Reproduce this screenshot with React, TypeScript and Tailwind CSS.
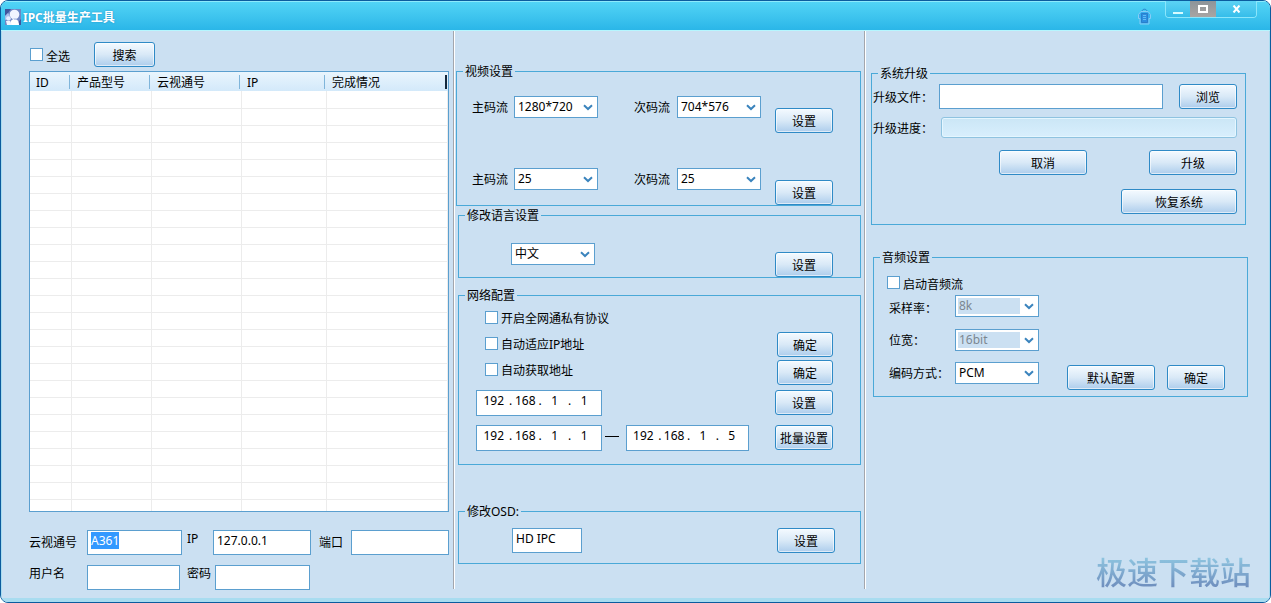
import { useEffect, useRef, useState } from 'react';
import type { ReactNode } from 'react';

interface Column {
  title: string;
  width: string;
}

const columns: Column[] = [
  { title: 'ID', width: 'w-[41px]' },
  { title: '产品型号', width: 'w-[80px]' },
  { title: '云视通号', width: 'w-[90px]' },
  { title: 'IP', width: 'w-[85px]' },
  { title: '完成情况', width: 'w-auto' },
];

const ROW_COUNT = 24;

const inputClass = 'min-w-0 border border-[#5b9fcf] bg-white px-[3px] pb-1 outline-none';

function Button({ children, className = 'w-[58px]' }: { children: ReactNode; className?: string }) {
  return (
    <button
      type="button"
      className={`h-[25px] shrink-0 rounded-[3px] border border-[#2f8ac6] bg-linear-to-b from-[#f4faff] via-[#d9e9f7] to-[#adcdec] pt-0.5 text-center whitespace-nowrap shadow-[inset_0_0_0_1px_rgba(255,255,255,0.6)] hover:brightness-105 ${className}`}
    >
      {children}
    </button>
  );
}

function Combo({ id, options, label, disabled = false }: { id: string; options: string[]; label?: string; disabled?: boolean }) {
  return (
    <div className="relative h-[22px] w-[84px] shrink-0 border border-[#5b9fcf] bg-white p-0.5">
      <select
        id={id}
        aria-label={label}
        disabled={disabled}
        className="block h-4 w-full appearance-none bg-white pl-px leading-4 outline-none disabled:bg-[#cbe0f2] disabled:text-[#7c8791] disabled:opacity-100"
      >
        {options.map((option) => (
          <option key={option}>{option}</option>
        ))}
      </select>
      <span className="pointer-events-none absolute inset-y-0 right-0 flex w-[18px] items-center justify-center bg-white">
        <svg width="10" height="7" viewBox="0 0 10 7" fill="none" stroke="#3b84bd" strokeWidth="2">
          <path d="M1 1.2 5 5 9 1.2" />
        </svg>
      </span>
    </div>
  );
}

function Check({ label, className = '' }: { label: string; className?: string }) {
  return (
    <label className={`flex items-center gap-[3px] whitespace-nowrap ${className}`}>
      <input
        type="checkbox"
        className="h-[13px] w-[13px] shrink-0 appearance-none border border-[#5b9fcf] bg-white checked:bg-[#3b84bd]"
      />
      <span className="pt-1">{label}</span>
    </label>
  );
}

function Group({ title, children, className = '' }: { title: string; children: ReactNode; className?: string }) {
  return (
    <fieldset className={`min-w-0 border border-[#4aa9d8] ${className}`}>
      <legend className="ml-1.5 h-4 px-0.5 leading-[18px]">{title}</legend>
      {children}
    </fieldset>
  );
}

function IpInput({ value, label, className = 'w-[126px]' }: { value: string[]; label: string; className?: string }) {
  return (
    <div role="group" aria-label={label} className={`flex h-[26px] shrink-0 items-start border border-[#5b9fcf] bg-white pt-0.5 pr-1 pl-0.5 ${className}`}>
      {value.map((octet, index) => (
        <div key={index} className="flex min-w-0 flex-1">
          {index > 0 && <span className="w-1 shrink-0 text-center">.</span>}
          <input
            aria-label={`${label} ${index + 1}`}
            defaultValue={octet}
            maxLength={3}
            className="h-4 w-full min-w-0 bg-white text-center outline-none"
          />
        </div>
      ))}
    </div>
  );
}

function Separator() {
  return <div className="mb-[9px] w-0.5 shrink-0 border-r border-white bg-[#a3a6ad]" />;
}

function TitleBar() {
  return (
    <header className="flex h-[30px] shrink-0 items-start justify-between border-b border-[#b5f6ff] bg-linear-to-b from-[#52d5f6] to-[#2ab6e8] pl-1 shadow-[inset_0_1px_0_#8ceafc]">
      <div className="flex h-[30px] items-center gap-0.5 pt-0.5">
        <svg width="16" height="16" viewBox="0 0 16 16">
          <rect width="16" height="16" fill="#6f86c4" />
          <path d="M0 0h6L3 4 0 7zM11 16l5-6v6z" fill="#3f549c" />
          <path d="M0 7l3-3 2 3-2 3-3 1z" fill="#a9bdea" />
          <circle cx="9.5" cy="5.5" r="4.8" fill="#f1f5ff" />
          <path d="M5 16c0-4 2-6 4.500-6s4.500 2 4.500 6z" fill="#fff" />
          <circle cx="3.500" cy="9.500" r="2.300" fill="#e3ebff" />
          <path d="M1 12h4l2 4H2z" fill="#f1f5ff" />
          <path d="M8 9.500h4l-2 1.500z" fill="#9fb3e0" />
        </svg>
        <h1 className="pt-px font-bold text-white [text-shadow:0_0_2px_#1f8fc4]">IPC批量生产工具</h1>
      </div>
      <div className="flex items-start gap-[13px] pr-[13px]">
        <button type="button" aria-label="换肤" className="mt-[7px]">
          <svg width="15" height="17" viewBox="0 0 15 17" fill="none">
            <path d="M5 3.500C5 .5 10 .5 10 3.500" stroke="#2a7fcb" />
            <path d="M1.500 6.500 4 3.500h7l2.500 3v4h-1.500v5.500H3v-5.500H1.500z" fill="#38aef0" stroke="#86cdf6" />
            <path d="M4.500 5.500h6v9h-6z" fill="#2b8ee0" stroke="#2a7fcb" />
            <path d="M6 7.500h3M6 9.500h3M6 11.500h3" stroke="#62bdf5" />
          </svg>
        </button>
        <div className="flex h-[17px] overflow-hidden rounded-b-[4px] border border-t-0 border-[#8be6fb]">
          <button type="button" aria-label="最小化" className="flex w-6 items-end justify-center bg-linear-to-b from-[#5cd3f4] to-[#35bdea] pb-[3px]">
            <span className="h-0.5 w-2.5 bg-[#d8fbff]" />
          </button>
          <button type="button" aria-label="最大化" className="flex w-[26px] items-center justify-center bg-linear-to-b from-[#8d9499] to-[#a9a5a3]">
            <span className="h-2 w-2.5 border-2 border-white" />
          </button>
          <button type="button" aria-label="关闭" className="flex w-10 items-center justify-center bg-linear-to-b from-[#5cd3f4] to-[#35bdea]">
            <svg width="9" height="8" viewBox="0 0 9 8" stroke="#fff" strokeWidth="2">
              <path d="M1.500 0.500 7.500 7.500M7.500 0.500 1.500 7.500" />
            </svg>
          </button>
        </div>
      </div>
    </header>
  );
}

function DeviceTable() {
  return (
    <div className="mt-1 h-[441px] overflow-hidden border border-[#5b9fcf] bg-white">
      <table className="h-full w-full table-fixed border-collapse">
        <thead>
          <tr className="h-[19px] bg-linear-to-b from-[#e9f5fd] to-[#d3e9fa]">
            {columns.map((column, index) => (
              <th key={column.title} className={`p-0 text-left font-normal ${column.width}`}>
                <div
                  className={`mr-px h-3.5 pl-1.5 leading-4 ${
                    index === columns.length - 1 ? 'border-r-2 border-[#14283c]' : 'border-r border-[#7fb5da]'
                  }`}
                >
                  {column.title}
                </div>
              </th>
            ))}
          </tr>
        </thead>
        <tbody>
          {Array.from({ length: ROW_COUNT }, (_, row) => (
            <tr key={row} className="h-[17px] border-b border-[#ececec]">
              {columns.map((column) => (
                <td key={column.title} className="border-r border-[#ececec] p-0" />
              ))}
            </tr>
          ))}
          <tr>
            {columns.map((column) => (
              <td key={column.title} className="border-r border-[#ececec] p-0" />
            ))}
          </tr>
        </tbody>
      </table>
    </div>
  );
}

function DevicePanel() {
  const [serial, setSerial] = useState('A361');
  const serialRef = useRef<HTMLInputElement>(null);

  useEffect(() => {
    serialRef.current?.focus();
    serialRef.current?.select();
  }, []);

  return (
    <section className="min-w-0 pt-[11px] pr-1 pl-[27px]">
      <div className="flex items-center gap-6 pl-px">
        <Check label="全选" />
        <Button className="w-[61px]">搜索</Button>
      </div>
      <DeviceTable />
      <div className="mt-[18px] flex items-center">
        <label htmlFor="serial" className="w-[58px] shrink-0">云视通号</label>
        <input
          id="serial"
          ref={serialRef}
          value={serial}
          onChange={(e) => setSerial(e.target.value)}
          className={`h-[25px] w-[95px] selection:bg-[#3399ff] selection:text-white ${inputClass}`}
        />
        <label htmlFor="ip" className="w-[31px] shrink-0 pb-2 pl-[5px]">IP</label>
        <input id="ip" defaultValue="127.0.0.1" className={`h-[25px] w-[98px] ${inputClass}`} />
        <label htmlFor="port" className="w-10 shrink-0 pl-2">端口</label>
        <input id="port" className={`h-[25px] flex-1 ${inputClass}`} />
      </div>
      <div className="mt-2.5 flex items-center">
        <label htmlFor="user" className="w-[58px] shrink-0 pb-2">用户名</label>
        <input id="user" className={`h-[25px] w-[93px] ${inputClass}`} />
        <label htmlFor="password" className="w-[35px] shrink-0 pb-2 pl-[7px]">密码</label>
        <input id="password" type="password" className={`h-[25px] w-[95px] ${inputClass}`} />
      </div>
    </section>
  );
}

function StreamRow({ id, main, sub }: { id: string; main: string; sub: string }) {
  return (
    <div className="flex items-start">
      <label htmlFor={`${id}-main`} className="w-[42px] shrink-0 leading-6">主码流</label>
      <Combo id={`${id}-main`} options={[main]} />
      <label htmlFor={`${id}-sub`} className="ml-9 w-[43px] shrink-0 leading-6">次码流</label>
      <Combo id={`${id}-sub`} options={[sub]} />
      <Button className="mt-3 ml-auto w-[58px]">设置</Button>
    </div>
  );
}

function ConfigPanel() {
  return (
    <section className="flex min-w-0">
      <Separator />
      <div className="min-w-0 flex-1 pt-8 pr-[3px] pl-px">
        <Group title="视频设置">
          <div className="flex flex-col gap-[35px] pt-[17px] pr-[27px] pl-[15px]">
            <StreamRow id="resolution" main="1280*720" sub="704*576" />
            <StreamRow id="framerate" main="25" sub="25" />
          </div>
        </Group>

        <Group title="修改语言设置" className="mt-px ml-0.5">
          <div className="flex items-start justify-between pt-5 pr-[27px] pl-[52px]">
            <Combo id="language" label="语言" options={['中文', 'English']} />
            <Button className="mt-[9px] w-[58px]">设置</Button>
          </div>
        </Group>

        <Group title="网络配置" className="mt-[9px] ml-0.5">
          <div className="flex justify-between pr-[27px] pb-[13px] pl-[17px]">
            <div className="pt-px">
              <Check label="开启全网通私有协议" className="ml-[9px] h-[26px]" />
              <Check label="自动适应IP地址" className="ml-[9px] h-[26px]" />
              <Check label="自动获取地址" className="ml-[9px] h-[26px]" />
              <IpInput label="IP地址" value={['192', '168', '1', '1']} className="mt-2 w-[126px]" />
              <div className="mt-[9px] flex items-center">
                <IpInput label="起始IP" value={['192', '168', '1', '1']} />
                <span className="mr-[7px] mb-1 ml-[3px] h-px w-3.5 bg-black" />
                <IpInput label="结束IP" value={['192', '168', '1', '5']} className="w-[123px]" />
              </div>
            </div>
            <div className="flex flex-col items-end pt-[29px]">
              <Button className="w-14">确定</Button>
              <Button className="mt-[3px] w-14">确定</Button>
              <Button className="mt-[5px] w-[58px]">设置</Button>
              <Button className="mt-2.5 w-[58px]">批量设置</Button>
            </div>
          </div>
        </Group>

        <Group title="修改OSD:" className="mt-[38px] ml-0.5">
          <div className="flex justify-between pt-[9px] pr-[25px] pb-2.5 pl-[53px]">
            <input aria-label="OSD" defaultValue="HD IPC" className={`h-[25px] w-[70px] ${inputClass}`} />
            <Button>设置</Button>
          </div>
        </Group>
      </div>
    </section>
  );
}

function SystemPanel() {
  return (
    <section className="flex min-w-0">
      <Separator />
      <div className="min-w-0 flex-1 pt-[34px] pr-[21px] pl-[5px]">
        <Group title="系统升级" className="mr-0.5">
          <div className="flex flex-col pt-[3px] pr-2 pb-2.5 pl-px">
            <div className="flex items-center">
              <label htmlFor="firmware" className="w-[66px] shrink-0 pt-0.5">升级文件：</label>
              <input id="firmware" className={`mr-4 h-[25px] flex-1 ${inputClass}`} />
              <Button>浏览</Button>
            </div>
            <div className="mt-2 flex items-center">
              <span className="w-[68px] shrink-0 pt-0.5">升级进度：</span>
              <div
                role="progressbar"
                aria-label="升级进度"
                aria-valuenow={0}
                className="h-[21px] flex-1 rounded-[3px] border border-[#8fc3e0] bg-linear-to-b from-[#cbe6f6] to-[#d8effd] shadow-[inset_0_0_0_1px_#e4f6ff]"
              />
            </div>
            <div className="mt-3 flex justify-end gap-[62px]">
              <Button className="w-[88px]">取消</Button>
              <Button className="w-[88px]">升级</Button>
            </div>
            <Button className="mt-3.5 w-[116px] self-end">恢复系统</Button>
          </div>
        </Group>

        <Group title="音频设置" className="mt-6 ml-0.5">
          <div className="flex items-end justify-between pt-[11px] pr-[22px] pb-1.5 pl-[13px]">
            <div>
              <Check label="启动音频流" className="h-[13px]" />
              <div className="mt-1.5 flex items-center">
                <label htmlFor="sample-rate" className="w-[68px] pt-1.5 pl-0.5">采样率：</label>
                <Combo id="sample-rate" options={['8k']} disabled />
              </div>
              <div className="mt-3 flex items-center">
                <label htmlFor="bit-width" className="w-[68px] pt-0.5 pl-0.5">位宽：</label>
                <Combo id="bit-width" options={['16bit']} disabled />
              </div>
              <div className="mt-[11px] mb-1.5 flex items-center">
                <label htmlFor="encoding" className="w-[68px] pt-0.5 pl-0.5">编码方式：</label>
                <Combo id="encoding" options={['PCM', 'G711A', 'G711U']} />
              </div>
            </div>
            <div className="flex gap-3">
              <Button className="w-[88px]">默认配置</Button>
              <Button>确定</Button>
            </div>
          </div>
        </Group>
      </div>
    </section>
  );
}

export default function App() {
  return (
    <div className="relative flex min-h-screen flex-col overflow-hidden rounded-lg border border-[#0b5c9e] bg-[#cbe0f2] font-['Noto_Sans','Noto_Sans_CJK_SC',sans-serif] text-[12px] leading-4 text-black">
      <TitleBar />
      <main className="grid flex-1 grid-cols-[451fr_411fr_405fr] border-x border-b-4 border-[#a8dcf0]">
        <DevicePanel />
        <ConfigPanel />
        <SystemPanel />
      </main>
      <div className="pointer-events-none absolute right-[19px] bottom-2.5 bg-linear-to-b from-[#94cfe6] to-[#6a86b8] bg-clip-text text-[31px] leading-10 font-medium text-transparent">
        极速下载站
      </div>
    </div>
  );
}
